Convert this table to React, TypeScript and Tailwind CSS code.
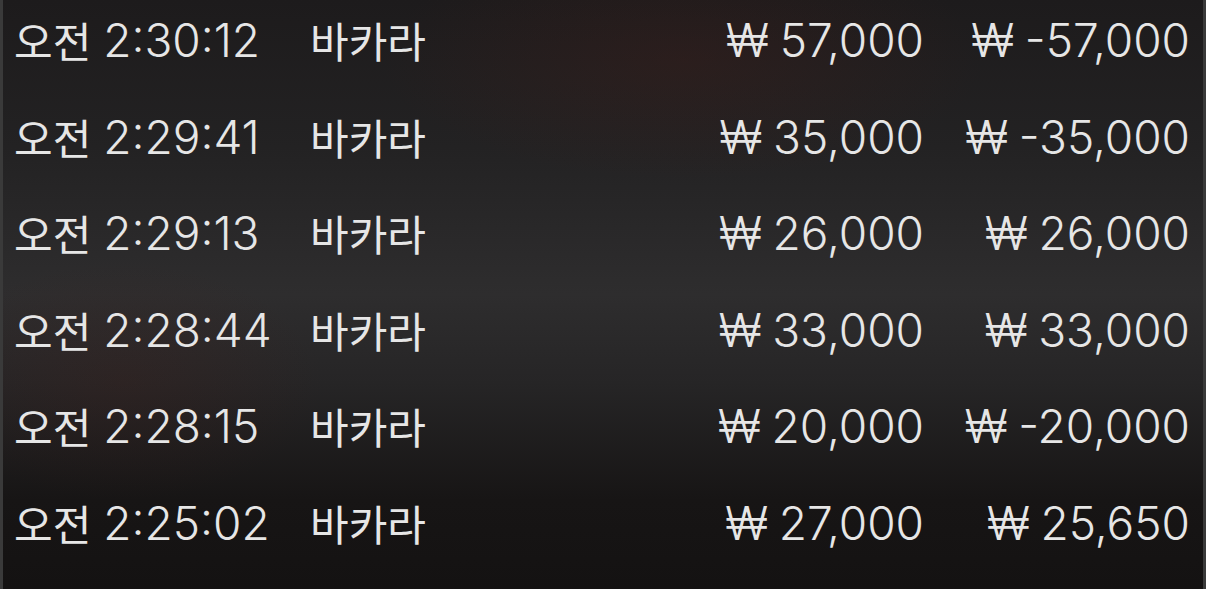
const rows = [
  { time: "2:30:12", bet: "57,000", result: "-57,000" },
  { time: "2:29:41", bet: "35,000", result: "-35,000" },
  { time: "2:29:13", bet: "26,000", result: "26,000" },
  { time: "2:28:44", bet: "33,000", result: "33,000" },
  { time: "2:28:15", bet: "20,000", result: "-20,000" },
  { time: "2:25:02", bet: "27,000", result: "25,650" },
];

const ko = { fontFamily: "'Noto Sans CJK KR', sans-serif" };

function Won({ value }: { value: string }) {
  return (
    <span className="whitespace-nowrap">
      <span className="mr-[11px]">₩</span>
      {value}
    </span>
  );
}

export default function App() {
  return (
    <div className="flex h-[589px] w-[1206px] overflow-hidden bg-[#1c1a1b]">
      <div className="w-[3px] shrink-0 bg-[#3a3a3a]" />
      <div className="relative flex-1 overflow-hidden bg-[linear-gradient(180deg,#1d1b1c_0%,#232223_25%,#2e2d2e_50%,#262526_65%,#171515_85%,#141212_100%)]">
        <div className="pointer-events-none absolute inset-0 bg-[radial-gradient(ellipse_300px_120px_at_680px_60px,rgba(70,30,25,0.3),transparent),radial-gradient(ellipse_200px_120px_at_120px_380px,rgba(70,30,25,0.22),transparent)]" />
        <div
          className="relative -mt-[8px] text-[46px] font-light leading-none text-[#e6e6e6]"
          style={{ fontFamily: "Inter, 'Noto Sans CJK KR', sans-serif" }}
        >
          {rows.map((r, i) => (
            <div key={i} className="grid h-[96.5px] grid-cols-[296px_1fr_auto_266px] items-center pl-[11px] pr-[13px]">
              <span className="flex items-center whitespace-nowrap">
                <span className="mr-[12px] text-[42px] font-normal" style={ko}>오전</span>
                {r.time}
              </span>
              <span className="text-[42px] font-normal" style={ko}>바카라</span>
              <span className="text-right">
                <Won value={r.bet} />
              </span>
              <span className="text-right">
                <Won value={r.result} />
              </span>
            </div>
          ))}
        </div>
      </div>
      <div className="w-[3px] shrink-0 bg-[#3a3a3a]" />
    </div>
  );
}
